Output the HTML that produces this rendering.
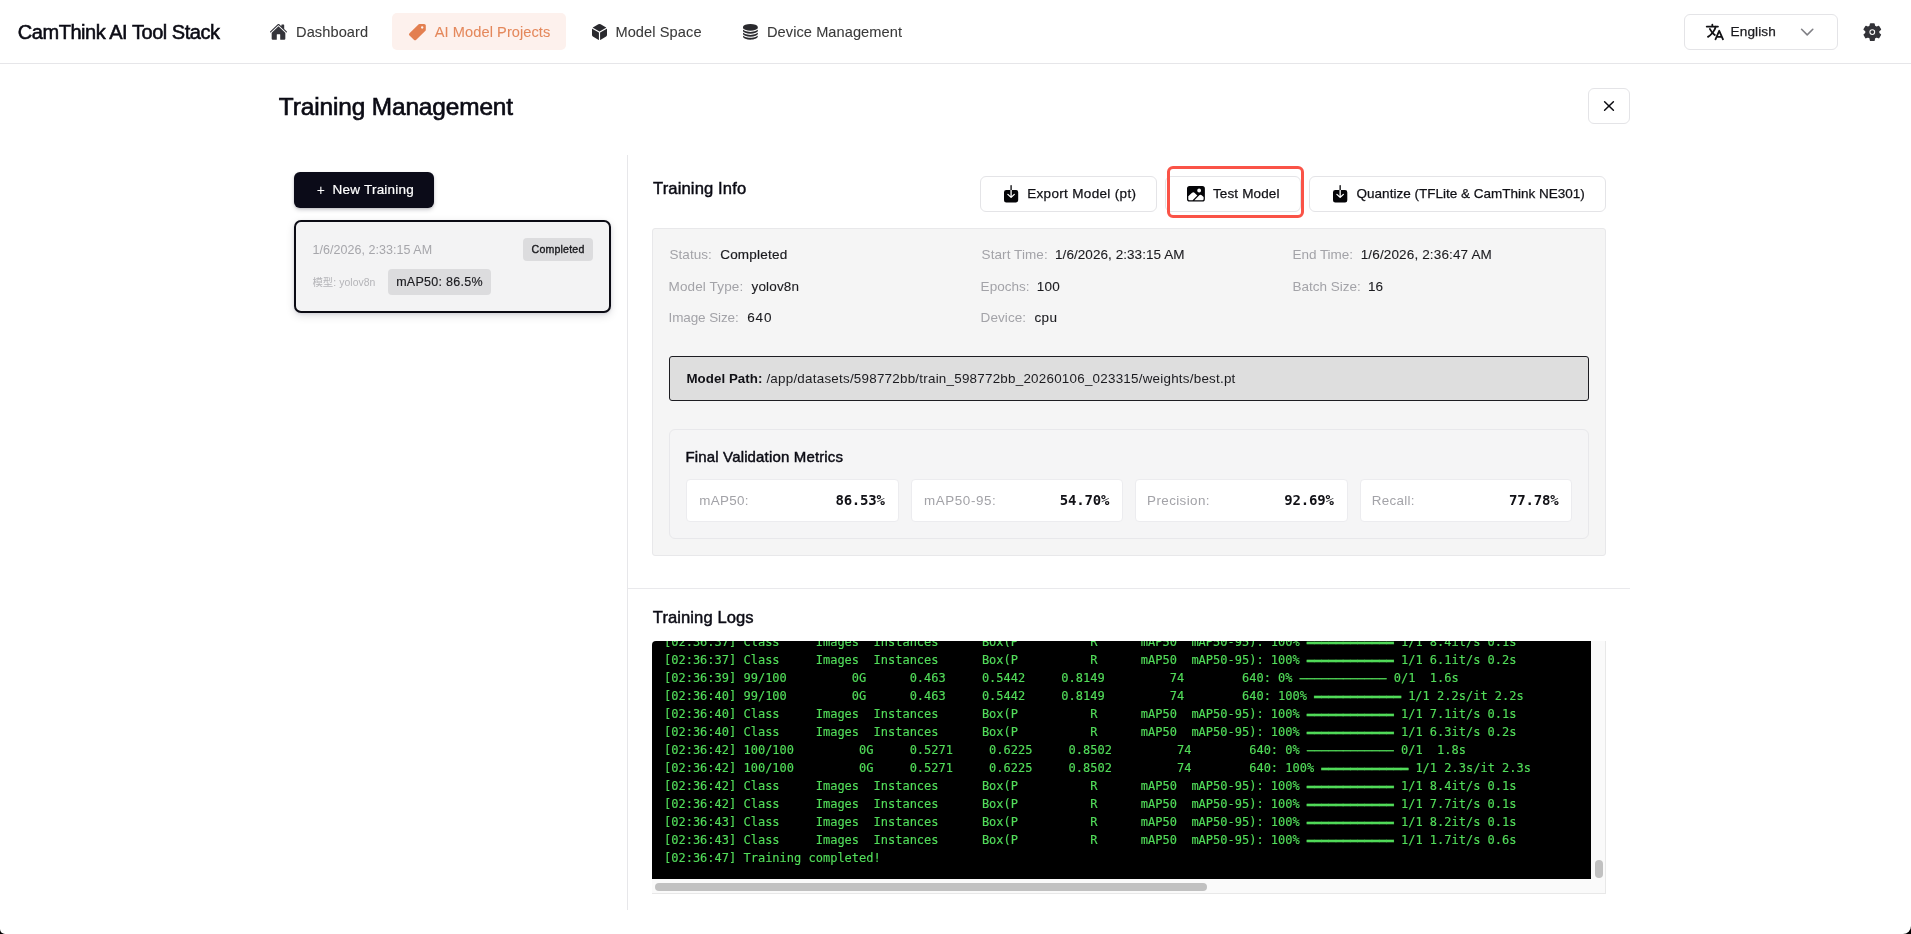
<!DOCTYPE html>
<html lang="en"><head><meta charset="utf-8"><title>CamThink AI Tool Stack - Training Management</title>
<style>
html{margin:0;padding:0;background:#000;}
body{margin:0;padding:0;background:#fff;border-radius:0 0 8px 5px;}
body{width:1911px;height:934px;position:relative;overflow:hidden;font-family:"Liberation Sans","Noto Sans CJK SC",sans-serif;}
.b{position:absolute;box-sizing:border-box;}
.t{position:absolute;white-space:pre;margin:0;}
#tx{position:absolute;left:0;top:0;width:1911px;height:934px;will-change:transform;}
.i{position:absolute;display:block;overflow:visible;}
.btn{background:#fff;border:1px solid #e4e4e7;border-radius:6px;}
#log{position:absolute;left:652px;top:641px;width:939px;height:238px;background:#000;border-radius:4px 0 0 0;overflow:hidden;}
#log pre,#loglines{position:absolute;left:12.4px;top:-8.15px;margin:0;font:12px/18px "DejaVu Sans Mono","Liberation Mono",monospace;color:#52dd5a;-webkit-text-stroke:0.15px #52dd5a;white-space:normal;will-change:transform;}
#loglines div{height:18px;white-space:pre;}
.hb{-webkit-text-stroke:0.4px #52dd5a;position:relative;top:0.6px}
.lb{position:relative;top:0.8px}
</style></head><body>
<!-- header -->
<div class="b" style="left:0;top:63px;width:1911px;height:1px;background:#e6e6e9"></div>
<div class="b" style="left:392px;top:13px;width:174px;height:36.5px;background:#fdf1ed;border-radius:5px"></div>
<div class="b btn" style="left:1684px;top:14px;width:154px;height:36px"></div>
<!-- page head -->
<div class="b btn" style="left:1588px;top:88px;width:42px;height:36px"></div>
<!-- left panel -->
<div class="b" style="left:627px;top:155px;width:1px;height:755px;background:#e7e7ea"></div>
<div class="b" style="left:294px;top:172px;width:140px;height:36px;background:#0b0b18;border-radius:6px;box-shadow:0 2px 4px rgba(10,10,30,.18),0 1px 2px rgba(10,10,30,.12)"></div>
<div class="b" style="left:294px;top:220px;width:317px;height:93px;background:#f3f3f4;border:2px solid #0b0b14;border-radius:7px;box-shadow:0 3px 8px rgba(10,10,40,.13),0 1px 3px rgba(10,10,40,.1)"></div>
<div class="b" style="left:523px;top:238px;width:70px;height:23px;background:#dcdcde;border-radius:4px"></div>
<div class="b" style="left:388px;top:269px;width:103px;height:26px;background:#dcdcde;border-radius:4px"></div>
<!-- right: buttons -->
<div class="b btn" style="left:980px;top:176px;width:177px;height:36px"></div>
<div class="b btn" style="left:1165px;top:176px;width:136px;height:36px"></div>
<div class="b btn" style="left:1309px;top:176px;width:297px;height:36px"></div>
<div class="b" style="left:1167px;top:166px;width:137px;height:52px;border:3px solid #fa5347;border-radius:6px"></div>
<!-- info box -->
<div class="b" style="left:652px;top:228px;width:954px;height:328px;background:#f5f5f5;border:1px solid #e8e8ea;border-radius:3px"></div>
<div class="b" style="left:669px;top:356px;width:920px;height:45px;background:#dedede;border:1px solid #1d1d22;border-radius:3px"></div>
<div class="b" style="left:669px;top:429px;width:920px;height:110px;background:#f5f5f6;border:1px solid #e8e8eb;border-radius:6px"></div>
<div class="b mc" style="left:686px;width:212.5px"></div>
<div class="b mc" style="left:911px;width:212px"></div>
<div class="b mc" style="left:1135px;width:212.5px"></div>
<div class="b mc" style="left:1360px;width:212px"></div>
<style>.mc{top:479px;height:43px;background:#fff;border:1px solid #ececef;border-radius:4px}</style>
<!-- divider -->
<div class="b" style="left:628px;top:588px;width:1002px;height:1px;background:#e9e9ec"></div>
<!-- log -->
<div class="b" style="left:652px;top:641px;width:954px;height:253px;background:#fafafa;border-right:1px solid #e8e8e8;border-bottom:1px solid #e8e8e8;border-radius:4px 0 0 0"></div>
<div id="log"><div id="loglines">
<div>[02:36:37] Class     Images  Instances      Box(P          R      mAP50  mAP50-95): 100% <span class="hb">━━━━━━━━━━━━</span> 1/1 8.4it/s 0.1s</div>
<div>[02:36:37] Class     Images  Instances      Box(P          R      mAP50  mAP50-95): 100% <span class="hb">━━━━━━━━━━━━</span> 1/1 6.1it/s 0.2s</div>
<div>[02:36:39] 99/100         0G      0.463     0.5442     0.8149         74        640: 0% <span class="lb">────────────</span> 0/1  1.6s</div>
<div>[02:36:40] 99/100         0G      0.463     0.5442     0.8149         74        640: 100% <span class="hb">━━━━━━━━━━━━</span> 1/1 2.2s/it 2.2s</div>
<div>[02:36:40] Class     Images  Instances      Box(P          R      mAP50  mAP50-95): 100% <span class="hb">━━━━━━━━━━━━</span> 1/1 7.1it/s 0.1s</div>
<div>[02:36:40] Class     Images  Instances      Box(P          R      mAP50  mAP50-95): 100% <span class="hb">━━━━━━━━━━━━</span> 1/1 6.3it/s 0.2s</div>
<div>[02:36:42] 100/100         0G     0.5271     0.6225     0.8502         74        640: 0% <span class="lb">────────────</span> 0/1  1.8s</div>
<div>[02:36:42] 100/100         0G     0.5271     0.6225     0.8502         74        640: 100% <span class="hb">━━━━━━━━━━━━</span> 1/1 2.3s/it 2.3s</div>
<div>[02:36:42] Class     Images  Instances      Box(P          R      mAP50  mAP50-95): 100% <span class="hb">━━━━━━━━━━━━</span> 1/1 8.4it/s 0.1s</div>
<div>[02:36:42] Class     Images  Instances      Box(P          R      mAP50  mAP50-95): 100% <span class="hb">━━━━━━━━━━━━</span> 1/1 7.7it/s 0.1s</div>
<div>[02:36:43] Class     Images  Instances      Box(P          R      mAP50  mAP50-95): 100% <span class="hb">━━━━━━━━━━━━</span> 1/1 8.2it/s 0.1s</div>
<div>[02:36:43] Class     Images  Instances      Box(P          R      mAP50  mAP50-95): 100% <span class="hb">━━━━━━━━━━━━</span> 1/1 1.7it/s 0.6s</div>
<div>[02:36:47] Training completed!</div>
</div></div>
<div class="b" style="left:1595px;top:860px;width:8px;height:18px;background:#c1c1c1;border-radius:4px"></div>
<div class="b" style="left:655px;top:883px;width:552px;height:8px;background:#c1c1c1;border-radius:4px"></div>
<!-- icons -->
<svg class="i" style="left:270.20px;top:23.90px" width="17.00" height="15.80" viewBox="17 32 478 448" preserveAspectRatio="none" fill="#34343a" ><path d="M261.56 101.28a8 8 0 00-11.06 0L66.4 277.15a8 8 0 00-2.47 5.79L63.9 448a32 32 0 0032 32H192a16 16 0 0016-16V328a8 8 0 018-8h80a8 8 0 018 8v136a16 16 0 0016 16h96.06a32 32 0 0032-32V282.94a8 8 0 00-2.47-5.79z"/><path d="M490.91 244.15l-74.8-71.56V64a16 16 0 00-16-16h-48a16 16 0 00-16 16v32l-57.92-55.38C272.77 35.14 264.71 32 256 32c-8.68 0-16.72 3.14-22.14 8.63l-212.7 203.5c-6.22 6-7 15.87-1.34 22.37A16 16 0 0043 267.56L250.5 69.28a8 8 0 0111.06 0l207.52 198.28a16 16 0 0022.59-.44c6.14-6.36 5.63-16.86-.76-22.97z"/></svg>
<svg class="i" style="left:408.90px;top:24.00px" width="16.80" height="16.20" viewBox="32 32 448 448" preserveAspectRatio="none" fill="#e37f50" ><path d="M467 45.2A44.45 44.45 0 00435.29 32H312.36a30.63 30.63 0 00-21.52 8.89L45.09 286.59a44.82 44.82 0 000 63.32l117 117a44.83 44.83 0 0063.34 0l245.65-245.6A30.6 30.6 0 00480 199.8v-123a44.24 44.24 0 00-13-31.6zM384 160a32 32 0 1132-32 32 32 0 01-32 32z"/></svg>
<svg class="i" style="left:591.80px;top:24.00px" width="15.00" height="16.00" viewBox="48 32 416 448" preserveAspectRatio="none" fill="#2a2a2e" ><path d="M440.9 136.3a4 4 0 000-6.91L288.16 40.65a64.14 64.14 0 00-64.33 0L71.12 129.39a4 4 0 000 6.91L254 243.88a4 4 0 004.06 0zM54 163.51a4 4 0 00-6 3.49v173.89a48 48 0 0023.84 41.39L234 479.51a4 4 0 006-3.46V274.3a4 4 0 00-2-3.46zM272 275v201a4 4 0 006 3.46l162.15-97.23A48 48 0 00464 340.89V167a4 4 0 00-6-3.45l-184 108a4 4 0 00-2 3.45z"/></svg>
<svg class="i" style="left:742.70px;top:24.30px" width="14.80" height="15.70" viewBox="48 32 416 448" preserveAspectRatio="none" fill="#2a2a2e" ><path d="M256 428c-52.35 0-111.39-11.61-157.93-31-17.07-7.19-31.69-18.82-43.64-28a4 4 0 00-6.43 3.18v12.58c0 28.07 23.49 53.22 66.14 70.82C152.29 471.33 202.67 480 256 480s103.7-8.67 141.86-24.42C440.51 438 464 412.83 464 384.76v-12.58a4 4 0 00-6.43-3.18c-11.95 9.17-26.57 20.81-43.65 28-46.54 19.39-105.57 31-157.92 31z"/><path d="M464 126.51c-.81-27.65-24.18-52.4-66-69.85C359.74 40.76 309.34 32 256 32s-103.74 8.76-141.91 24.66c-41.78 17.41-65.15 42.11-66 69.69L48 144c0 6.41 5.2 16.48 14.63 24.73 11.13 9.73 27.65 19.33 47.78 27.73C153.24 214.36 207.67 225 256 225s102.76-10.68 145.59-28.58c20.13-8.4 36.65-18 47.78-27.73C458.8 160.49 464 150.42 464 144z"/><path d="M413.92 226c-46.53 19.43-105.57 31-157.92 31s-111.39-11.57-157.93-31c-17.07-7.15-31.69-18.79-43.64-28a4 4 0 00-6.43 3.22V232c0 6.41 5.2 14.48 14.63 22.73 11.13 9.74 27.65 19.33 47.78 27.74C153.24 300.34 207.67 311 256 311s102.76-10.68 145.59-28.57c20.13-8.41 36.65-18 47.78-27.74C458.8 246.47 464 238.41 464 232v-30.78a4 4 0 00-6.43-3.18c-11.95 9.17-26.57 20.81-43.65 27.96z"/><path d="M413.92 312c-46.54 19.41-105.57 31-157.92 31s-111.39-11.59-157.93-31c-17.07-7.17-31.69-18.81-43.64-28a4 4 0 00-6.43 3.2V317c0 6.41 5.2 14.47 14.62 22.71 11.13 9.74 27.66 19.33 47.79 27.74C153.24 385.32 207.66 396 256 396s102.76-10.68 145.59-28.57c20.13-8.41 36.65-18 47.78-27.74C458.8 331.44 464 323.37 464 317v-29.8a4 4 0 00-6.43-3.18c-11.95 9.17-26.57 20.81-43.65 27.98z"/></svg>
<svg class="i" style="left:1706.30px;top:24.00px" width="17.70" height="16.00" viewBox="30 46 452 420" preserveAspectRatio="none" fill="none" stroke="#111114"><g fill="none" stroke-linecap="round" stroke-linejoin="round" stroke-width="46"><path d="M48 112h288M192 64v48M272 448l96-224 96 224M301.5 384h133M281.3 112S257 206 199 277 80 384 80 384"/><path d="M256 336s-35-27-72-75-56-85-56-85"/></g></svg>
<svg class="i" style="left:1799px;top:26px" width="16" height="12" viewBox="0 0 16 12" fill="none" stroke="#808086" stroke-width="1.6" stroke-linecap="round" stroke-linejoin="round"><path d="M2.6 3.3 L8.2 8.9 L13.8 3.3"/></svg>
<svg class="i" style="left:1862.60px;top:22.80px" width="18.60" height="18.20" viewBox="6 6 500 500" preserveAspectRatio="none" fill="#333338" stroke="#333338"><path fill-rule="evenodd" stroke-linejoin="round" stroke-width="40" d="M198.6 93.8 L210.3 30.6 L301.7 30.6 L313.4 93.8 L367.7 125.2 L428.4 103.7 L474.1 182.9 L425.1 224.6 L425.1 287.4 L474.1 329.1 L428.4 408.3 L367.7 386.8 L313.4 418.2 L301.7 481.4 L210.3 481.4 L198.6 418.2 L144.3 386.8 L83.6 408.3 L37.9 329.1 L86.9 287.4 L86.9 224.6 L37.9 182.9 L83.6 103.7 L144.3 125.2Z M354 256 a98 98 0 1 0 -196 0 a98 98 0 1 0 196 0Z"/><circle cx="256" cy="256" r="50"/></svg>
<svg class="i" style="left:1601px;top:98px" width="16" height="16" viewBox="0 0 16 16" fill="none" stroke="#0b0b10" stroke-width="1.5" stroke-linecap="round"><path d="M3.6 3.7 L12.4 12.3 M12.4 3.7 L3.6 12.3"/></svg>
<svg class="i" style="left:1003.80px;top:185.30px" width="14.20" height="17.40" viewBox="80 32 352 448" preserveAspectRatio="none" fill="#050508" ><path d="M376 160H272v153.37l52.69-52.68a16 16 0 0122.62 22.62l-80 80a16 16 0 01-22.62 0l-80-80a16 16 0 0122.62-22.62L240 313.37V160H136a56.06 56.06 0 00-56 56v208a56.06 56.06 0 0056 56h240a56.06 56.06 0 0056-56V216a56.06 56.06 0 00-56-56zM272 48a16 16 0 00-32 0v112h32z"/></svg>
<svg class="i" style="left:1332.90px;top:185.30px" width="14.30" height="17.40" viewBox="80 32 352 448" preserveAspectRatio="none" fill="#050508" ><path d="M376 160H272v153.37l52.69-52.68a16 16 0 0122.62 22.62l-80 80a16 16 0 01-22.62 0l-80-80a16 16 0 0122.62-22.62L240 313.37V160H136a56.06 56.06 0 00-56 56v208a56.06 56.06 0 0056 56h240a56.06 56.06 0 0056-56V216a56.06 56.06 0 00-56-56zM272 48a16 16 0 00-32 0v112h32z"/></svg>
<svg class="i" style="left:1187.00px;top:186.00px" width="17.90" height="15.60" viewBox="32 64 448 384" preserveAspectRatio="none" fill="#050508" ><path d="M416 64H96a64.07 64.07 0 00-64 64v256a64.07 64.07 0 0064 64h320a64.07 64.07 0 0064-64V128a64.07 64.07 0 00-64-64zm-80 64a48 48 0 11-48 48 48.05 48.05 0 0148-48zM96 416a32 32 0 01-32-32v-67.63l94.84-84.3a48.06 48.06 0 0165.8 1.9l64.95 64.81L172.37 416zm352-32a32 32 0 01-32 32H217.63l121.42-121.42a47.72 47.72 0 0161.64-.16L448 333.84z"/></svg>
<!-- texts -->
<div id="tx">
<div class="t" style='left:17.80px;top:21.70px;font:400 20px/20px "Liberation Sans", "Noto Sans CJK SC", sans-serif;color:#0b0b14;letter-spacing:-0.462px;-webkit-text-stroke:0.55px #0b0b14'>CamThink AI Tool Stack</div>
<div class="t" style='left:296.00px;top:22.40px;font:400 14.6px/20px "Liberation Sans", "Noto Sans CJK SC", sans-serif;color:#393939;letter-spacing:0.090px;-webkit-text-stroke:0.08px #393939'>Dashboard</div>
<div class="t" style='left:434.80px;top:22.40px;font:400 14.6px/20px "Liberation Sans", "Noto Sans CJK SC", sans-serif;color:#e4885c;letter-spacing:0.071px;-webkit-text-stroke:0.08px #e4885c'>AI Model Projects</div>
<div class="t" style='left:615.40px;top:22.40px;font:400 14.6px/20px "Liberation Sans", "Noto Sans CJK SC", sans-serif;color:#393939;letter-spacing:0.093px;-webkit-text-stroke:0.08px #393939'>Model Space</div>
<div class="t" style='left:767.00px;top:22.40px;font:400 14.6px/20px "Liberation Sans", "Noto Sans CJK SC", sans-serif;color:#393939;letter-spacing:0.069px;-webkit-text-stroke:0.08px #393939'>Device Management</div>
<div class="t" style='left:1730.50px;top:22.30px;font:400 13.6px/20px "Liberation Sans", "Noto Sans CJK SC", sans-serif;color:#1b1b1f;letter-spacing:0.129px;-webkit-text-stroke:0.25px #1b1b1f'>English</div>
<div class="t" style='left:278.80px;top:97.40px;font:400 24.4px/20px "Liberation Sans", "Noto Sans CJK SC", sans-serif;color:#0b0b14;letter-spacing:-0.115px;-webkit-text-stroke:0.65px #0b0b14'>Training Management</div>
<div class="t" style='left:316.80px;top:180.20px;font:400 14px/20px "Liberation Sans", "Noto Sans CJK SC", sans-serif;color:#fff;letter-spacing:0.000px'>+</div>
<div class="t" style='left:332.60px;top:180.30px;font:400 13.5px/20px "Liberation Sans", "Noto Sans CJK SC", sans-serif;color:#fff;letter-spacing:0.216px;-webkit-text-stroke:0.2px #fff'>New Training</div>
<div class="t" style='left:312.40px;top:240.00px;font:400 12.5px/20px "Liberation Sans", "Noto Sans CJK SC", sans-serif;color:#a6a6ab;letter-spacing:0.046px'>1/6/2026, 2:33:15 AM</div>
<div class="t" style='left:531.60px;top:239.00px;font:400 10.6px/20px "Liberation Sans", "Noto Sans CJK SC", sans-serif;color:#18181c;letter-spacing:0.183px;-webkit-text-stroke:0.35px #18181c'>Completed</div>
<div class="t" style='left:312.40px;top:273.00px;font:400 10.4px/20px "Liberation Sans", "Noto Sans CJK SC", sans-serif;color:#b4b4b8;letter-spacing:0.061px'>模型: yolov8n</div>
<div class="t" style='left:396.20px;top:272.00px;font:400 12.5px/20px "Liberation Sans", "Noto Sans CJK SC", sans-serif;color:#1b1b1f;letter-spacing:0.267px;-webkit-text-stroke:0.15px #1b1b1f'>mAP50: 86.5%</div>
<div class="t" style='left:653.10px;top:179.00px;font:400 16.6px/20px "Liberation Sans", "Noto Sans CJK SC", sans-serif;color:#0b0b14;letter-spacing:0.117px;-webkit-text-stroke:0.45px #0b0b14'>Training Info</div>
<div class="t" style='left:1027.20px;top:184.20px;font:400 13.5px/20px "Liberation Sans", "Noto Sans CJK SC", sans-serif;color:#111116;letter-spacing:0.329px;-webkit-text-stroke:0.25px #111116'>Export Model (pt)</div>
<div class="t" style='left:1212.90px;top:184.00px;font:400 13.5px/20px "Liberation Sans", "Noto Sans CJK SC", sans-serif;color:#111116;letter-spacing:0.147px;-webkit-text-stroke:0.25px #111116'>Test Model</div>
<div class="t" style='left:1356.60px;top:184.20px;font:400 13.5px/20px "Liberation Sans", "Noto Sans CJK SC", sans-serif;color:#111116;letter-spacing:0.003px;-webkit-text-stroke:0.25px #111116'>Quantize (TFLite &amp; CamThink NE301)</div>
<div class="t" style='left:669.50px;top:245.10px;font:400 13.5px/20px "Liberation Sans", "Noto Sans CJK SC", sans-serif;color:#a3a3a8;letter-spacing:0.038px'>Status:</div>
<div class="t" style='left:720.20px;top:245.10px;font:400 13.5px/20px "Liberation Sans", "Noto Sans CJK SC", sans-serif;color:#1b1b1f;letter-spacing:0.215px;-webkit-text-stroke:0.2px #1b1b1f'>Completed</div>
<div class="t" style='left:668.50px;top:276.90px;font:400 13.5px/20px "Liberation Sans", "Noto Sans CJK SC", sans-serif;color:#a3a3a8;letter-spacing:0.141px'>Model Type:</div>
<div class="t" style='left:751.60px;top:276.90px;font:400 13.5px/20px "Liberation Sans", "Noto Sans CJK SC", sans-serif;color:#1b1b1f;letter-spacing:0.129px;-webkit-text-stroke:0.1px #1b1b1f'>yolov8n</div>
<div class="t" style='left:668.50px;top:308.30px;font:400 13.5px/20px "Liberation Sans", "Noto Sans CJK SC", sans-serif;color:#a3a3a8;letter-spacing:-0.103px'>Image Size:</div>
<div class="t" style='left:747.20px;top:308.30px;font:400 13.5px/20px "Liberation Sans", "Noto Sans CJK SC", sans-serif;color:#1b1b1f;letter-spacing:0.842px;-webkit-text-stroke:0.1px #1b1b1f'>640</div>
<div class="t" style='left:981.60px;top:245.10px;font:400 13.5px/20px "Liberation Sans", "Noto Sans CJK SC", sans-serif;color:#a3a3a8;letter-spacing:0.084px'>Start Time:</div>
<div class="t" style='left:1055.00px;top:245.10px;font:400 13.5px/20px "Liberation Sans", "Noto Sans CJK SC", sans-serif;color:#1b1b1f;letter-spacing:0.061px;-webkit-text-stroke:0.1px #1b1b1f'>1/6/2026, 2:33:15 AM</div>
<div class="t" style='left:980.60px;top:276.90px;font:400 13.5px/20px "Liberation Sans", "Noto Sans CJK SC", sans-serif;color:#a3a3a8;letter-spacing:0.029px'>Epochs:</div>
<div class="t" style='left:1036.80px;top:276.90px;font:400 13.5px/20px "Liberation Sans", "Noto Sans CJK SC", sans-serif;color:#1b1b1f;letter-spacing:0.192px;-webkit-text-stroke:0.1px #1b1b1f'>100</div>
<div class="t" style='left:980.60px;top:308.30px;font:400 13.5px/20px "Liberation Sans", "Noto Sans CJK SC", sans-serif;color:#a3a3a8;letter-spacing:0.073px'>Device:</div>
<div class="t" style='left:1034.40px;top:308.30px;font:400 13.5px/20px "Liberation Sans", "Noto Sans CJK SC", sans-serif;color:#1b1b1f;letter-spacing:0.371px;-webkit-text-stroke:0.1px #1b1b1f'>cpu</div>
<div class="t" style='left:1292.40px;top:245.10px;font:400 13.5px/20px "Liberation Sans", "Noto Sans CJK SC", sans-serif;color:#a3a3a8;letter-spacing:-0.009px'>End Time:</div>
<div class="t" style='left:1360.70px;top:245.10px;font:400 13.5px/20px "Liberation Sans", "Noto Sans CJK SC", sans-serif;color:#1b1b1f;letter-spacing:0.145px;-webkit-text-stroke:0.1px #1b1b1f'>1/6/2026, 2:36:47 AM</div>
<div class="t" style='left:1292.40px;top:276.90px;font:400 13.5px/20px "Liberation Sans", "Noto Sans CJK SC", sans-serif;color:#a3a3a8;letter-spacing:0.007px'>Batch Size:</div>
<div class="t" style='left:1368.00px;top:276.90px;font:400 13.5px/20px "Liberation Sans", "Noto Sans CJK SC", sans-serif;color:#1b1b1f;letter-spacing:-0.108px;-webkit-text-stroke:0.1px #1b1b1f'>16</div>
<div class="t" style='left:686.50px;top:369.00px;font:700 13.3px/20px "Liberation Sans", "Noto Sans CJK SC", sans-serif;color:#111116;letter-spacing:0.048px'>Model Path:</div>
<div class="t" style='left:766.40px;top:369.00px;font:400 13.4px/20px "Liberation Sans", "Noto Sans CJK SC", sans-serif;color:#1b1b1f;letter-spacing:0.239px'>/app/datasets/598772bb/train_598772bb_20260106_023315/weights/best.pt</div>
<div class="t" style='left:685.50px;top:447.20px;font:400 15px/20px "Liberation Sans", "Noto Sans CJK SC", sans-serif;color:#0b0b14;letter-spacing:0.154px;-webkit-text-stroke:0.45px #0b0b14'>Final Validation Metrics</div>
<div class="t" style='left:699.30px;top:491.40px;font:400 13.4px/20px "Liberation Sans", "Noto Sans CJK SC", sans-serif;color:#a3a3a8;letter-spacing:0.318px'>mAP50:</div>
<div class="t" style='left:835.40px;top:490.40px;font:700 14px/20px "DejaVu Sans Mono", "Liberation Mono", monospace;color:#111116;letter-spacing:-0.189px'>86.53%</div>
<div class="t" style='left:923.90px;top:491.40px;font:400 13.4px/20px "Liberation Sans", "Noto Sans CJK SC", sans-serif;color:#a3a3a8;letter-spacing:0.617px'>mAP50-95:</div>
<div class="t" style='left:1059.80px;top:490.40px;font:700 14px/20px "DejaVu Sans Mono", "Liberation Mono", monospace;color:#111116;letter-spacing:-0.189px'>54.70%</div>
<div class="t" style='left:1147.10px;top:491.40px;font:400 13.4px/20px "Liberation Sans", "Noto Sans CJK SC", sans-serif;color:#a3a3a8;letter-spacing:0.403px'>Precision:</div>
<div class="t" style='left:1284.30px;top:490.40px;font:700 14px/20px "DejaVu Sans Mono", "Liberation Mono", monospace;color:#111116;letter-spacing:-0.169px'>92.69%</div>
<div class="t" style='left:1371.80px;top:491.40px;font:400 13.4px/20px "Liberation Sans", "Noto Sans CJK SC", sans-serif;color:#a3a3a8;letter-spacing:0.282px'>Recall:</div>
<div class="t" style='left:1508.90px;top:490.40px;font:700 14px/20px "DejaVu Sans Mono", "Liberation Mono", monospace;color:#111116;letter-spacing:-0.149px'>77.78%</div>
<div class="t" style='left:652.80px;top:607.90px;font:400 16.6px/20px "Liberation Sans", "Noto Sans CJK SC", sans-serif;color:#0b0b14;letter-spacing:0.072px;-webkit-text-stroke:0.45px #0b0b14'>Training Logs</div>
</div>
</body></html>
